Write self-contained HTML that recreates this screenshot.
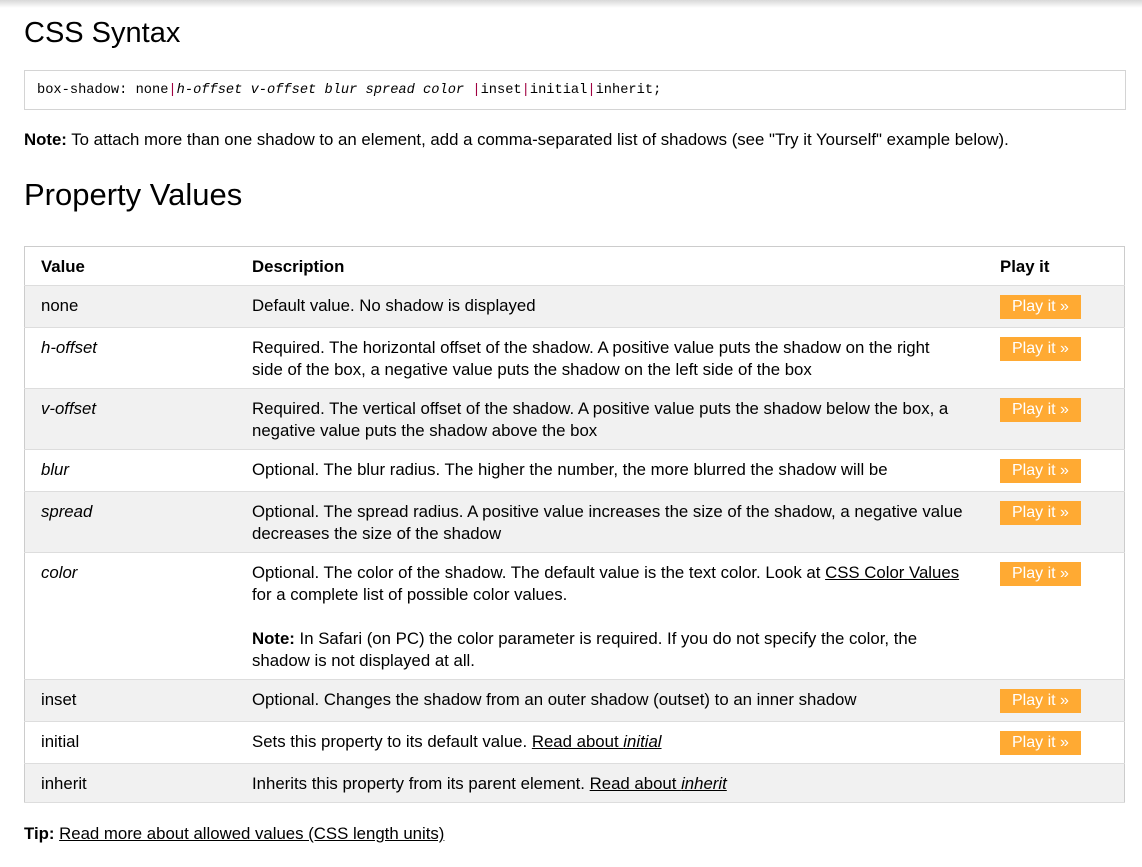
<!DOCTYPE html>
<html><head><meta charset="utf-8"><style>
body{margin:0;width:1142px;height:867px;overflow:hidden;background:#fff;font-family:"Liberation Sans",sans-serif;color:#000;font-size:16.8px;position:relative}
.topsh{position:absolute;left:0;top:0;width:1142px;height:8px;background:linear-gradient(#d8d8d8,#fff)}
h1{position:absolute;left:24px;margin:0;font-weight:normal;font-size:29px;line-height:40px}
.code{position:absolute;left:24px;top:70px;height:38px;border:1px solid #d4d4d4;font-family:"Liberation Mono",monospace;font-size:13.7px;line-height:40px;padding-left:12px;width:1088px;color:#000}
.code i{font-style:italic}.code b{font-weight:normal;color:#a00040}
.p{position:absolute;left:24px;line-height:22px}
table{position:absolute;left:24px;top:246px;width:1101px;border-collapse:collapse;border:1px solid #ccc}
td,th{text-align:left;vertical-align:top;padding:9px 0 7px 16px;line-height:22px;border-bottom:1px solid #ddd}
tr:nth-child(even) td{background:#f1f1f1}
.c1{width:195px}.c2{width:732px}
.btn{display:inline-block;background:#ffaa33;color:#fff;padding:0 12px;line-height:24px;height:24px;margin-top:0;font-size:16px}
a{color:#000}
</style></head><body>
<div class="topsh"></div>
<h1 style="top:13px">CSS Syntax</h1>
<div class="code">box-shadow: none<b>|</b><i>h-offset v-offset blur spread color </i><b>|</b>inset<b>|</b>initial<b>|</b>inherit;</div>
<div class="p" style="top:129px"><b>Note:</b> To attach more than one shadow to an element, add a comma-separated list of shadows (see "Try it Yourself" example below).</div>
<h1 style="top:175px;font-size:31px">Property Values</h1>
<table>
<tr style="height:39px"><th class="c1">Value</th><th class="c2">Description</th><th>Play it</th></tr>
<tr style="height:42px"><td>none</td><td>Default value. No shadow is displayed</td><td><span class="btn">Play it »</span></td></tr>
<tr style="height:61px"><td><i>h-offset</i></td><td>Required. The horizontal offset of the shadow. A positive value puts the shadow on the right<br>side of the box, a negative value puts the shadow on the left side of the box</td><td><span class="btn">Play it »</span></td></tr>
<tr style="height:61px"><td><i>v-offset</i></td><td>Required. The vertical offset of the shadow. A positive value puts the shadow below the box, a<br>negative value puts the shadow above the box</td><td><span class="btn">Play it »</span></td></tr>
<tr style="height:42px"><td><i>blur</i></td><td>Optional. The blur radius. The higher the number, the more blurred the shadow will be</td><td><span class="btn">Play it »</span></td></tr>
<tr style="height:61px"><td><i>spread</i></td><td>Optional. The spread radius. A positive value increases the size of the shadow, a negative value<br>decreases the size of the shadow</td><td><span class="btn">Play it »</span></td></tr>
<tr style="height:127px"><td><i>color</i></td><td>Optional. The color of the shadow. The default value is the text color. Look at <a href="#">CSS Color Values</a><br>for a complete list of possible color values.<br><br><b>Note:</b> In Safari (on PC) the color parameter is required. If you do not specify the color, the<br>shadow is not displayed at all.</td><td><span class="btn">Play it »</span></td></tr>
<tr style="height:42px"><td>inset</td><td>Optional. Changes the shadow from an outer shadow (outset) to an inner shadow</td><td><span class="btn">Play it »</span></td></tr>
<tr style="height:42px"><td>initial</td><td>Sets this property to its default value. <a href="#">Read about <i>initial</i></a></td><td><span class="btn">Play it »</span></td></tr>
<tr style="height:39px"><td>inherit</td><td>Inherits this property from its parent element. <a href="#">Read about <i>inherit</i></a></td><td></td></tr>
</table>
<div class="p" style="top:823px"><b>Tip:</b> <a href="#">Read more about allowed values (CSS length units)</a></div>
</body></html>
